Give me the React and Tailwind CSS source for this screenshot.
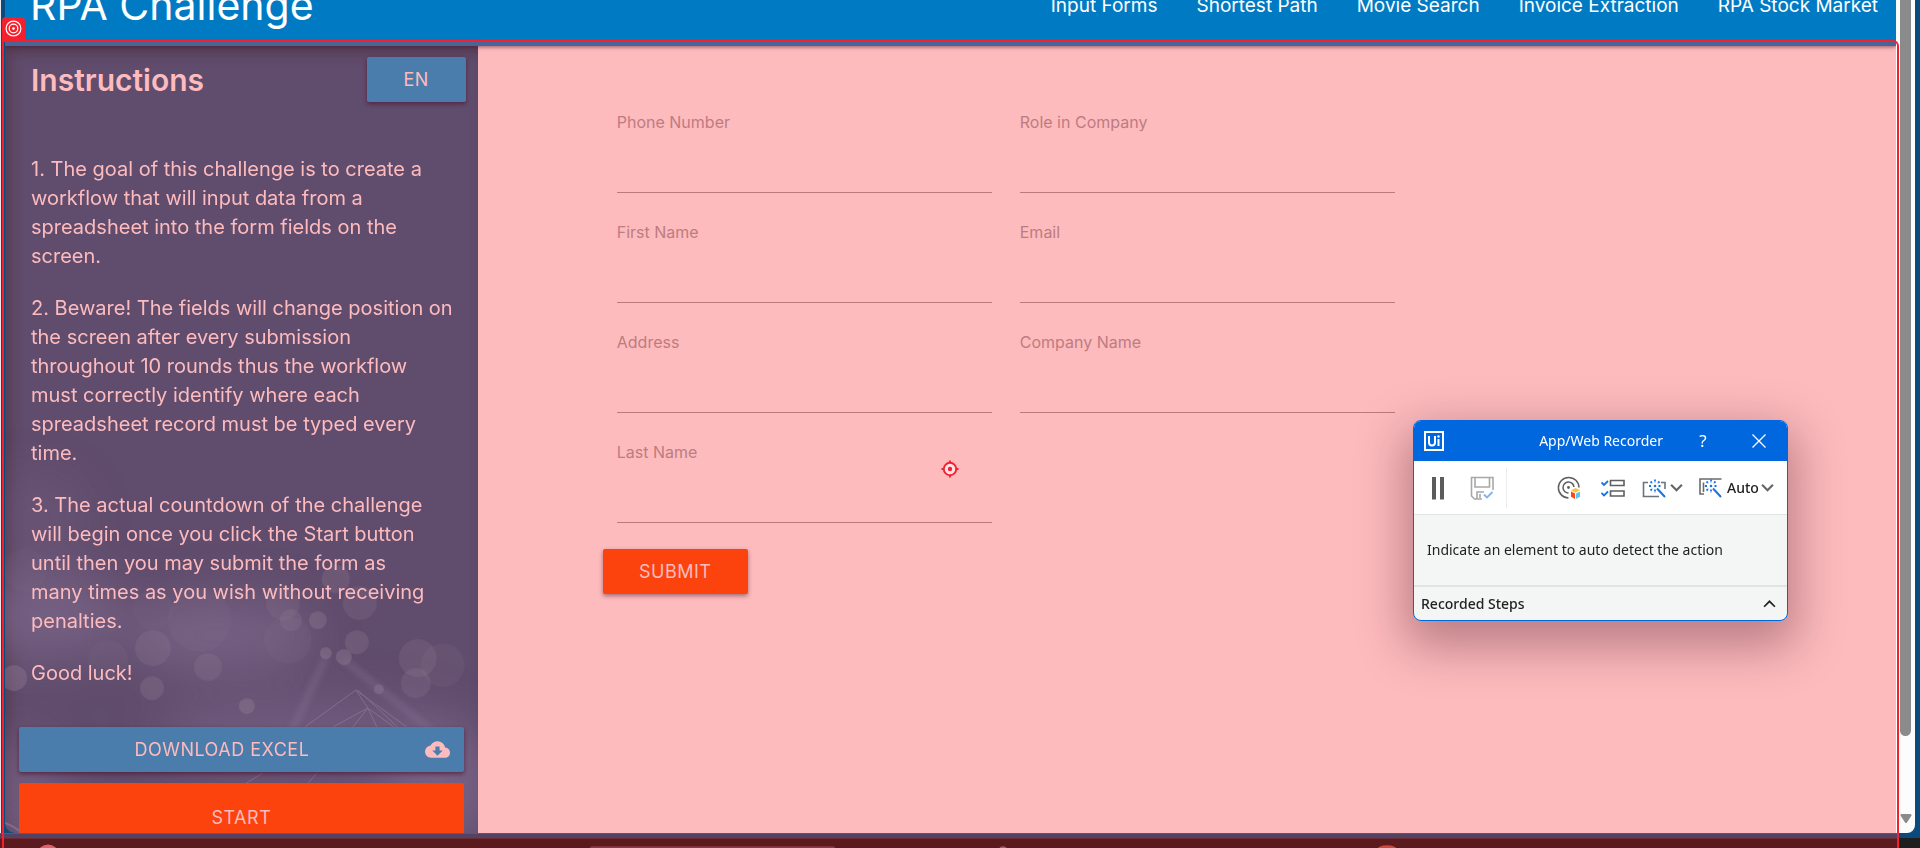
import React from "react";
import { MdCloudDownload } from "react-icons/md";

const navLinks = ["Input Forms", "Shortest Path", "Movie Search", "Invoice Extraction", "RPA Stock Market"];

const instructions = [
  [
    "1. The goal of this challenge is to create a",
    "workflow that will input data from a",
    "spreadsheet into the form fields on the",
    "screen.",
  ],
  [
    "2. Beware! The fields will change position on",
    "the screen after every submission",
    "throughout 10 rounds thus the workflow",
    "must correctly identify where each",
    "spreadsheet record must be typed every",
    "time.",
  ],
  [
    "3. The actual countdown of the challenge",
    "will begin once you click the Start button",
    "until then you may submit the form as",
    "many times as you wish without receiving",
    "penalties.",
  ],
  ["Good luck!"],
];

const fields = [
  "Phone Number",
  "Role in Company",
  "First Name",
  "Email",
  "Address",
  "Company Name",
  "Last Name",
];

const bokeh = [
  [148, 603, 18, 0.16], [147, 643, 12, 0.2], [203, 622, 14, 0.16], [242, 661, 8, 0.26],
  [9, 633, 13, 0.26], [103, 615, 20, 0.07], [278, 558, 17, 0.12], [286, 575, 11, 0.16],
  [313, 575, 9, 0.24], [331, 534, 14, 0.18], [355, 558, 17, 0.16], [352, 597, 12, 0.2],
  [321, 608, 6, 0.3], [339, 612, 8, 0.28], [374, 644, 5, 0.26], [413, 613, 19, 0.15],
  [438, 620, 22, 0.09], [411, 638, 15, 0.15], [195, 575, 32, 0.07], [283, 595, 24, 0.07],
  [20, 525, 22, 0.05], [148, 565, 20, 0.05],
];

function SidebarBackdrop() {
  return (
    <svg
      className="absolute inset-0 h-full w-full"
      viewBox="0 0 473 788"
      preserveAspectRatio="xMidYMax slice"
      aria-hidden="true"
    >
      <defs>
        <filter id="haze" x="-50%" y="-50%" width="200%" height="200%">
          <feGaussianBlur stdDeviation="24" />
        </filter>
        <filter id="soft" x="-50%" y="-50%" width="200%" height="200%">
          <feGaussianBlur stdDeviation="3" />
        </filter>
      </defs>
      <g filter="url(#haze)" fill="#8a7498">
        <ellipse cx="40" cy="570" rx="80" ry="45" opacity="0.5" />
        <ellipse cx="30" cy="470" rx="50" ry="40" opacity="0.2" />
        <ellipse cx="215" cy="590" rx="95" ry="38" opacity="0.5" />
        <ellipse cx="300" cy="690" rx="150" ry="38" opacity="0.4" />
        <ellipse cx="440" cy="740" rx="60" ry="60" opacity="0.5" />
        <ellipse cx="10" cy="750" rx="50" ry="60" opacity="0.4" />
      </g>
      <g fill="#a08aa0">
        {bokeh.map(([x, y, r, o]) => (
          <circle key={`${x}-${y}`} cx={x} cy={y} r={r} opacity={o * 1.15} />
        ))}
      </g>
      <path d="M339 615 L430 688 M321 612 L285 690" stroke="#9580a2" strokeWidth="7" opacity="0.28" filter="url(#soft)" />
      <g stroke="#a995b0" fill="none" opacity="0.4">
        <path d="M351 645 L300 682 M351 645 L402 682 M353 645 L395 684 M351 645 L363 663 L328 682 M363 663 L348 682 M363 663 L373 684 M363 663 L392 684" />
        <path d="M235 742 L258 728 M300 742 L312 728" />
        <path d="M0 778 Q10 782 14 786" strokeWidth="2" />
      </g>
    </svg>
  );
}

function Wand({ frame }) {
  return (
    <svg className="size-6 shrink-0" viewBox="0 0 24 24" fill="none" aria-hidden="true">
      {frame === "box" ? (
        <path d="M6 6.500H1.500V20.500H17 M19 6.500H23V13" stroke="#6b737a" strokeWidth="1.600" />
      ) : (
        <path d="M23.500 3H2V18H6 M5.500 6.500V16" stroke="#6b6b6b" strokeWidth="1.600" />
      )}
      <path
        d="M13 3.500V6.500 M13 13.500V16.500 M7 10H9.500 M16.500 10H19 M8.500 5.500L10.500 7.500 M17.500 5.500L15.500 7.500 M8.500 14.500L10.500 12.500"
        stroke="#1a74e0"
        strokeWidth="1.800"
        strokeDasharray="2 0.700"
      />
      <path d="M15 12.500L23 21" stroke="#1a74e0" strokeWidth="2" />
      <circle cx="13" cy="10" r="1.300" fill="#1a74e0" />
    </svg>
  );
}

function Chevron({ up }) {
  return (
    <svg className="h-[13px] w-[13px] shrink-0" viewBox="0 0 12 12" fill="none" aria-hidden="true">
      <path d={up ? "M1 9L6 4L11 9" : "M1 3.500L6 8.500L11 3.500"} stroke={up ? "#222" : "#666"} strokeWidth={up ? 1.6 : 2} />
    </svg>
  );
}

function Recorder() {
  return (
    <section
      aria-label="App/Web Recorder"
      className="absolute top-[420px] right-[132px] z-30 w-[375px] overflow-hidden rounded-[8px] border border-[#0067df] bg-[#f4f6f6] font-['Noto_Sans',sans-serif] text-[#222] shadow-[0_18px_48px_8px_rgba(70,20,30,0.36)]"
    >
      <div className="flex h-[40px] items-center bg-[#0067df] pr-[21px] pl-[10px] text-white">
        <svg className="size-5" viewBox="0 0 20 20" fill="none" aria-hidden="true">
          <rect x="1" y="1" width="18" height="18" stroke="#fff" strokeWidth="2" />
          <path d="M5 5V11.500Q5 14.500 8 14.500Q11 14.500 11 11.500V5 M14.500 8V15" stroke="#fff" strokeWidth="2" />
          <circle cx="14.500" cy="5.500" r="1.200" fill="#fff" />
        </svg>
        <h2 className="flex-1 text-right text-[14px] leading-5 whitespace-nowrap">App/Web Recorder</h2>
        <button aria-label="Help" className="mr-[43px] ml-[34px] w-3 text-center text-[17px] leading-6">?</button>
        <button aria-label="Close">
          <svg className="size-[14px]" viewBox="0 0 14 14" aria-hidden="true">
            <path d="M0.500 0.500L13.500 13.500M13.500 0.500L0.500 13.500" stroke="#fff" strokeWidth="1.300" />
          </svg>
        </button>
      </div>

      <div className="flex h-[54px] items-center border-b border-[#e2e4e4] bg-white pl-[18px]">
        <button aria-label="Pause">
          <svg className="h-6 w-3" viewBox="0 0 12 24" aria-hidden="true">
            <path d="M0 1H4V23.500H0Z M8 1H12V23.500H8Z" fill="#5c5c5c" />
          </svg>
        </button>
        <button aria-label="Save" className="ml-[26px]">
          <svg className="size-6" viewBox="0 0 24 24" fill="none" aria-hidden="true">
            <path d="M23 14V1.500H1.500V20L4.500 23H12" stroke="#a8a8a8" strokeWidth="1.600" />
            <path d="M5 2V11H19.500V2 M7 23V16H14 M10 18V22" stroke="#a8a8a8" strokeWidth="1.600" />
            <path d="M14 18.500L17 21.500L22.500 16" stroke="#84b2ef" strokeWidth="1.800" />
          </svg>
        </button>
        <span className="ml-[12px] h-10 w-px bg-[#ececec]" />
        <button aria-label="Object repository" className="ml-[50px]">
          <svg className="size-6" viewBox="0 0 24 24" fill="none" aria-hidden="true">
            <path d="M22 11.500A10.300 10.300 0 1 0 11.500 22" stroke="#5f5f5f" strokeWidth="1.500" />
            <path d="M17 11A5.500 5.500 0 1 0 11.500 17" stroke="#5f5f5f" strokeWidth="1.500" />
            <circle cx="11.500" cy="11.500" r="1.400" fill="#5f5f5f" />
            <path d="M18.500 12L23 14.300L18.500 16.800L14 14.300Z" fill="#f6c544" />
            <path d="M14 15.500L18 17.600V23L14 20.800Z" fill="#fa4616" />
            <path d="M23 15.500L19 17.600V23L23 20.800Z" fill="#5cc4f4" />
          </svg>
        </button>
        <button aria-label="Steps" className="ml-[20px]">
          <svg className="size-6" viewBox="0 0 24 24" fill="none" aria-hidden="true">
            <path d="M9.500 4.500H23V9.500H9.500Z M9.500 15H23V20H9.500Z" stroke="#5f5f5f" strokeWidth="1.600" />
            <path d="M0.500 6.500L3 9L7 5 M0.500 17L3 19.500L7 15.500" stroke="#1a74e0" strokeWidth="1.800" />
          </svg>
        </button>
        <button aria-label="Wait for element" className="ml-[17px] flex items-center gap-[4px]">
          <Wand frame="box" />
          <Chevron />
        </button>
        <button className="ml-[15px] flex items-center gap-[5px]">
          <Wand frame="corner" />
          <span className="flex items-center gap-[2px] text-[14px] leading-5 font-medium">
            Auto
            <Chevron />
          </span>
        </button>
      </div>

      <p className="flex h-[72px] items-center border-b-2 border-[#e2e4e4] pl-[13px] text-[14px] leading-5 whitespace-nowrap">
        Indicate an element to auto detect the action
      </p>
      <button className="flex h-[33px] w-full items-center justify-between pr-[11px] pl-[7px] text-[14px] leading-5 font-medium">
        Recorded Steps
        <Chevron up />
      </button>
    </section>
  );
}

export default function App() {
  return (
    <div className="relative flex h-screen flex-col overflow-hidden bg-[#0b4a7c] font-[Inter,sans-serif]">
      <div className="flex min-h-0 flex-1 border-l border-[#e8e8ee] pl-[4px]">
        <div className="flex min-w-0 flex-1 flex-col overflow-hidden rounded-bl-[10px]">
          <header className="relative z-10 flex h-[46px] shrink-0 items-end justify-between border-b-4 border-[#4a6498] bg-[#007bc3] pr-[18px] pl-[25px] text-white shadow-[0_1px_4px_rgba(70,20,40,0.6)]">
            <h1 className="pb-[13px] text-[41px] leading-[48px]">RPA Challenge</h1>
            <nav className="flex gap-[39px] pb-[23px] text-[19px] leading-[26px] whitespace-nowrap">
              {navLinks.map((label) => (
                <a key={label} href="#">{label}</a>
              ))}
            </nav>
          </header>

          <div className="flex min-h-0 flex-1">
            <aside className="relative flex w-[25%] shrink-0 flex-col overflow-hidden bg-[#604c6c] text-[#fdbbbe] shadow-[inset_6px_8px_12px_rgba(80,50,70,0.6)]">
              <SidebarBackdrop />
              <div className="relative flex items-start justify-between pt-[11px] pr-[12px] pl-[26px]">
                <h2 className="pt-[5px] text-[30px] leading-[36px] font-semibold">Instructions</h2>
                <button className="h-[45px] w-[99px] rounded-[2px] bg-[#4a7dab] text-[18px] tracking-[0.5px] shadow-[0_2px_4px_rgba(80,20,50,0.7)]">
                  EN
                </button>
              </div>
              <div className="relative flex flex-col gap-[23px] pt-[53px] pl-[26px] text-[20px] leading-[29px] whitespace-nowrap">
                {instructions.map((lines) => (
                  <p key={lines[0]}>
                    {lines.map((line, i) => (
                      <React.Fragment key={line}>
                        {i > 0 && <br />}
                        {line}
                      </React.Fragment>
                    ))}
                  </p>
                ))}
              </div>
              <div className="relative flex flex-col gap-[11px] pt-[39px] pr-[14px] pl-[14px]">
                <a
                  href="#"
                  className="flex h-[45px] items-center rounded-[2px] bg-[#4a7dab] pr-[14px] text-[18px] tracking-[0.5px] shadow-[0_2px_4px_rgba(80,20,50,0.7)]"
                >
                  <span className="flex-1 text-center">DOWNLOAD EXCEL</span>
                  <MdCloudDownload className="size-[25px]" />
                </a>
                <button className="h-[68px] rounded-[2px] bg-[#fc430d] text-[18px] tracking-[0.5px]">START</button>
              </div>
            </aside>

            <main className="min-w-0 flex-1 bg-[#fdbbbe] pt-[66px] pl-[125px]">
              <form className="max-w-[806px]" onSubmit={(e) => e.preventDefault()}>
                <div className="grid grid-cols-2 gap-y-[29px]">
                  {fields.map((label) => (
                    <label key={label} className="flex flex-col px-[14px] text-[16px] leading-[20px] text-[#bd7c80]">
                      {label}
                      <input className="h-[61px] w-full border-b border-[#bb7a80] bg-transparent outline-none" />
                    </label>
                  ))}
                </div>
                <button className="mt-[26px] h-[45px] w-[145px] rounded-[2px] bg-[#fc430d] text-[18px] tracking-[0.5px] text-[#fdbbbe] shadow-[0_2px_4px_rgba(80,30,40,0.5)]">
                  SUBMIT
                </button>
              </form>
            </main>
          </div>
        </div>

        <div className="mr-[5px] flex w-[19px] shrink-0 flex-col justify-between rounded-br-[8px] bg-[#fcfcfc] pl-[4px]">
          <div className="h-[736px] w-[11px] rounded-b-full bg-[#8b8b8b]" />
          <svg className="mb-[8px] h-[11px] w-[12px]" viewBox="0 0 11 11" aria-hidden="true">
            <path d="M0 1Q0 0 1 0H10Q11 0 11 1.500L6.500 8.500Q5.500 9.500 4.500 8.500L0 1.500Z" fill="#8b8b8b" />
          </svg>
        </div>
      </div>

      <div className="flex h-[5px] shrink-0">
        <div className="flex-1 border-t border-[#6c5070] bg-[#524265]" />
        <div className="w-[21px]" />
      </div>
      <footer className="flex h-[10px] shrink-0 overflow-hidden">
        <svg className="h-[10px] min-w-0 flex-1 border-t border-[#6a2c30] bg-[#5a1a1e]" viewBox="0 0 1899 10" preserveAspectRatio="none" aria-hidden="true">
          <circle cx="48" cy="16" r="10" fill="#e0606c" />
          <rect x="590" y="8" width="245" height="4" rx="2" fill="#8c3a40" />
          <circle cx="1003" cy="12" r="4" fill="#b0585c" />
          <ellipse cx="1387" cy="12" rx="10" ry="5" fill="#d2463c" />
        </svg>
        <div className="w-[21px] bg-[#1e1e1e]" />
      </footer>

      <div className="pointer-events-none absolute top-[40px] right-[21px] -bottom-2 left-[2px] z-20 rounded-tr-[6px] border-2 border-[#f5202e]" />
      <div className="absolute top-[17px] left-[2px] z-20 flex size-[23px] items-center justify-center rounded-t-[4px] bg-[#f5202e]">
        <svg className="size-[17px]" viewBox="0 0 17 17" fill="none" stroke="#fff" strokeWidth="1.200" aria-hidden="true">
          <circle cx="8.500" cy="8.500" r="7.400" />
          <circle cx="8.500" cy="8.500" r="4.300" />
          <circle cx="8.500" cy="8.500" r="1.300" fill="#fff" stroke="none" />
        </svg>
      </div>
      <svg className="absolute top-[460px] left-[941px] z-20 size-[18px]" viewBox="0 0 18 18" fill="none" aria-hidden="true">
        <circle cx="9" cy="9" r="6.200" fill="#fde4e6" stroke="#f5202e" strokeWidth="1.900" />
        <circle cx="9" cy="9" r="2.200" fill="#f5202e" />
        <path d="M9 0.500V3 M9 15V17.500 M0.500 9H3 M15 9H17.500" stroke="#f5202e" strokeWidth="1.900" />
      </svg>
      <Recorder />
    </div>
  );
}
